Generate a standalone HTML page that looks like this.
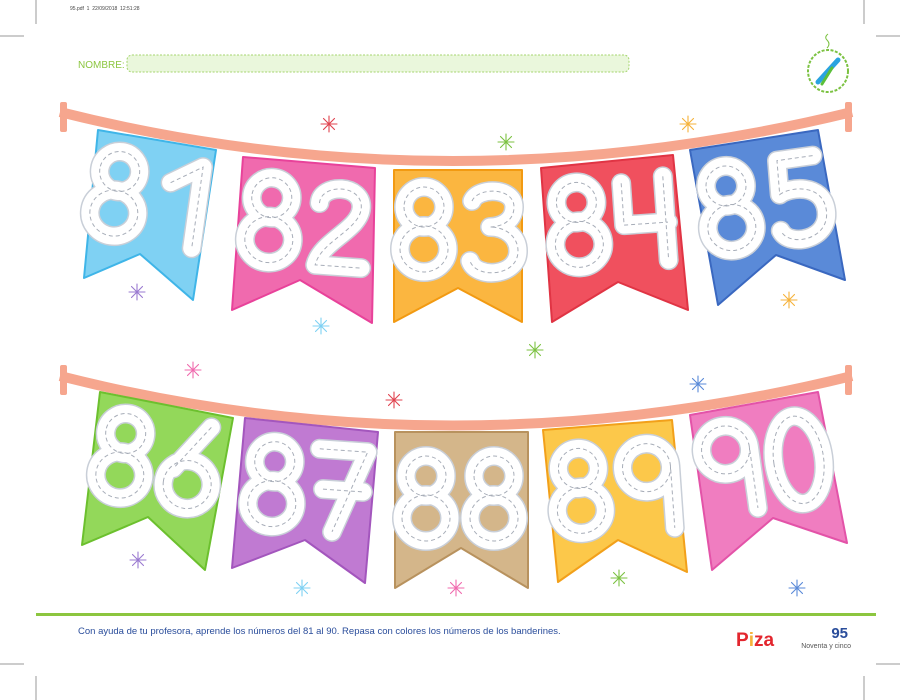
<!DOCTYPE html>
<html><head><meta charset="utf-8"><style>
html,body{margin:0;padding:0;background:#fff;}
body{width:900px;height:700px;position:relative;overflow:hidden;font-family:"Liberation Sans",sans-serif;}
</style></head><body>
<svg width="900" height="700" viewBox="0 0 900 700" xmlns="http://www.w3.org/2000/svg" style="position:absolute;left:0;top:0">
<defs>
<g id="star"><path d="M0,-8V8M-8,0H8M-5.5,-5.5L5.5,5.5M-5.5,5.5L5.5,-5.5" stroke-width="1.1" stroke-linecap="round"/></g>
<path id="d8" d="M8,22a20,20 0 1,0 40,0a20,20 0 1,0 -40,0M4,64a24,23 0 1,0 48,0a24,23 0 1,0 -48,0"/>
<path id="d1" d="M12,26 L42,6 L42,88"/>
<path id="d2" d="M8,24 C8,4 50,2 50,26 C50,48 12,62 8,86 L54,86"/>
<path id="d3" d="M8,16 C14,2 50,2 50,22 C50,38 34,42 26,42 C42,42 54,52 54,66 C54,92 12,94 6,76"/>
<path id="d4" d="M8,6 L8,48 L52,48 M50,2 L50,86"/>
<path id="d5" d="M50,4 L14,4 L12,38 C22,32 56,32 56,60 C56,90 14,92 8,74"/>
<path id="d6" d="M44,4 L12,50 M4,64a24,24 0 1,0 48,0a24,24 0 1,0 -48,0"/>
<path id="d7" d="M4,6 L52,6 L22,88 M10,46 L50,46"/>
<path id="d9" d="M52,26 a24,24 0 1,0 -48,0 a24,24 0 1,0 48,0 L52,88"/>
<path id="d0" d="M4,46 a25,44 0 1,0 50,0 a25,44 0 1,0 -50,0"/>
<g id="nums">
<g transform="translate(150,200) rotate(8) translate(-62,-46)"><use href="#d8"/><use href="#d1" x="68"/></g>
<g transform="translate(304,224) rotate(4) translate(-62,-46)"><use href="#d8"/><use href="#d2" x="68"/></g>
<g transform="translate(458,231) translate(-62,-46)"><use href="#d8"/><use href="#d3" x="68"/></g>
<g transform="translate(612,224) rotate(-4) translate(-62,-46)"><use href="#d8"/><use href="#d4" x="66"/></g>
<g transform="translate(763,205) rotate(-8) translate(-62,-46)"><use href="#d8"/><use href="#d5" x="68"/></g>
<g transform="translate(156,462) rotate(8) translate(-62,-46)"><use href="#d8"/><use href="#d6" x="68"/></g>
<g transform="translate(307,488) rotate(4) translate(-62,-46)"><use href="#d8"/><use href="#d7" x="68"/></g>
<g transform="translate(460,500) translate(-62,-46)"><use href="#d8"/><use href="#d8" x="68"/></g>
<g transform="translate(614,490) rotate(-4) translate(-62,-46)"><use href="#d8"/><use href="#d9" x="68"/></g>
<g transform="translate(762,465) rotate(-8) translate(-62,-46)"><use href="#d9"/><use href="#d0" x="70"/></g>
</g>
</defs>
<g stroke="#999" stroke-width="1">
<line x1="36" y1="0" x2="36" y2="24"/><line x1="864" y1="0" x2="864" y2="24"/>
<line x1="0" y1="36" x2="24" y2="36"/><line x1="876" y1="36" x2="900" y2="36"/>
<line x1="876" y1="664" x2="900" y2="664"/><line x1="864" y1="676" x2="864" y2="700"/>
<line x1="36" y1="676" x2="36" y2="700"/><line x1="0" y1="664" x2="24" y2="664"/>
</g>
<text x="70" y="10" font-size="5" fill="#444">95.pdf &#160;1 &#160;22/09/2018 &#160;12:51:28</text>
<text x="78" y="68" font-size="10" fill="#8cc63f">NOMBRE:</text>
<rect x="127" y="55" width="502" height="17" rx="5" fill="#eaf7dc" stroke="#a5d56e" stroke-width="1" stroke-dasharray="2 1.5"/>
<ellipse cx="828" cy="71" rx="20" ry="21" fill="#fff" stroke="#7cc242" stroke-width="2" stroke-dasharray="3 1.5"/>
<path d="M827,48 q4,-4 0,-8 q-3,-3 1,-6" stroke="#7cc242" fill="none" stroke-width="1"/>
<path d="M818,82 L838,60" stroke="#2aa3e0" stroke-width="5" stroke-linecap="round"/>
<path d="M822,84 L832,68" stroke="#5bbf3a" stroke-width="3" stroke-linecap="round"/>

<g fill="#f6a68e">
<rect x="60" y="102" width="7" height="30" rx="2"/><rect x="845" y="102" width="7" height="30" rx="2"/>
</g>
<path d="M60,112 Q450,210 852,112" stroke="#f6a68e" stroke-width="10" fill="none"/>
<g stroke-width="2" stroke-linejoin="round">
<polygon points="98,130 216,150 193,300 140,254 84,278" fill="#7fd1f3" stroke="#3fb5e8"/>
<polygon points="243,157 375,168 372,323 300,280 232,310" fill="#f06aae" stroke="#e8429a"/>
<polygon points="394,170 522,170 522,322 458,288 394,322" fill="#fbb640" stroke="#f29a12"/>
<polygon points="541,168 673,155 688,310 618,282 552,322" fill="#f0505e" stroke="#e03444"/>
<polygon points="690,150 818,130 845,280 776,255 718,305" fill="#5a8ad8" stroke="#3a68c0"/>
</g>
<g fill="#f6a68e">
<rect x="60" y="365" width="7" height="30" rx="2"/><rect x="845" y="365" width="7" height="30" rx="2"/>
</g>
<path d="M60,376 Q450,475 852,376" stroke="#f6a68e" stroke-width="10" fill="none"/>
<g stroke-width="2" stroke-linejoin="round">
<polygon points="100,392 233,418 205,570 148,517 82,545" fill="#93d85a" stroke="#6cc02e"/>
<polygon points="245,418 378,432 365,583 305,540 232,568" fill="#c07ad2" stroke="#a356bd"/>
<polygon points="395,432 528,432 528,588 461,548 395,588" fill="#d4b68a" stroke="#b8925e"/>
<polygon points="543,430 672,420 687,572 618,540 558,582" fill="#fcc84a" stroke="#f2a01a"/>
<polygon points="690,415 818,392 847,543 773,518 712,570" fill="#f07dc0" stroke="#e353a8"/>
</g>

<use href="#nums" fill="none" stroke="#c9cfd8" stroke-width="20" stroke-linecap="round" stroke-linejoin="round"/>
<use href="#nums" fill="none" stroke="#fff" stroke-width="17" stroke-linecap="round" stroke-linejoin="round"/>
<use href="#nums" fill="none" stroke="#a7adb8" stroke-width="1" stroke-dasharray="4 3"/>

<use href="#star" x="329" y="124" stroke="#e0434f"/>
<use href="#star" x="506" y="142" stroke="#7cc242"/>
<use href="#star" x="688" y="124" stroke="#f6b23a"/>
<use href="#star" x="137" y="292" stroke="#9a7ad0"/>
<use href="#star" x="321" y="326" stroke="#7fd1f3"/>
<use href="#star" x="535" y="350" stroke="#7cc242"/>
<use href="#star" x="789" y="300" stroke="#f6b23a"/>
<use href="#star" x="193" y="370" stroke="#f06aae"/>
<use href="#star" x="394" y="400" stroke="#e0434f"/>
<use href="#star" x="698" y="384" stroke="#5a8ad8"/>
<use href="#star" x="138" y="560" stroke="#9a7ad0"/>
<use href="#star" x="302" y="588" stroke="#7fd1f3"/>
<use href="#star" x="456" y="588" stroke="#f06aae"/>
<use href="#star" x="619" y="578" stroke="#7cc242"/>
<use href="#star" x="797" y="588" stroke="#5a8ad8"/>

<rect x="36" y="613" width="840" height="3" fill="#8cc63f"/>
<text x="78" y="634" font-size="9.5" fill="#2a4d9b">Con ayuda de tu profesora, aprende los números del 81 al 90. Repasa con colores los números de los banderines.</text>
<text x="736" y="646" font-size="19" font-weight="bold" fill="#e3262e">P<tspan fill="#f6b23a">i</tspan>za</text>
<text x="848" y="638" font-size="15" font-weight="bold" fill="#2a4d9b" text-anchor="end">95</text>
<text x="851" y="648" font-size="7" fill="#555" text-anchor="end">Noventa y cinco</text>
</svg>
</body></html>
